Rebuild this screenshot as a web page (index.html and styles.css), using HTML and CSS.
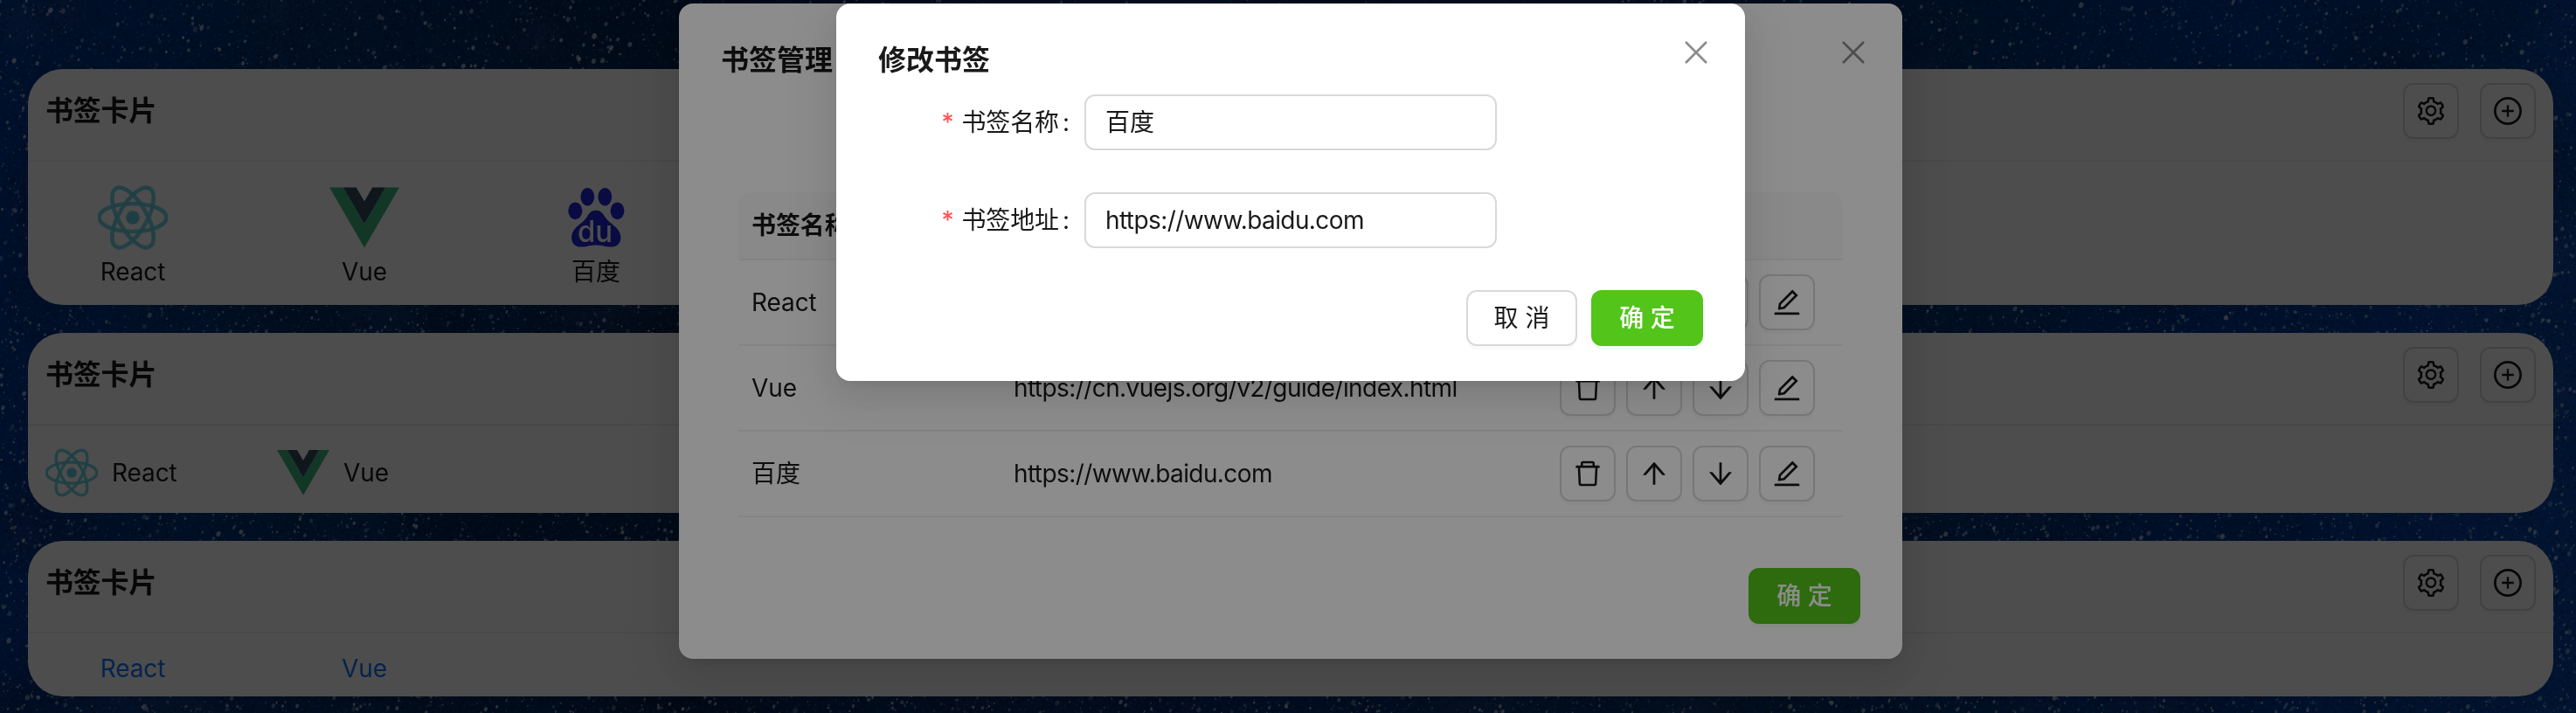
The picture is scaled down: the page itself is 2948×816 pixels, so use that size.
FILE: index.html
```html
<!DOCTYPE html>
<html lang="zh-CN">
<head>
<meta charset="utf-8">
<title>书签</title>
<link rel="stylesheet" href="styles.css">
</head>
<body>
<svg class="sprite" aria-hidden="true">
  <symbol id="i-setting" viewBox="64 64 896 896"><path d="M924.8 625.7l-65.5-56c3.1-19 4.7-38.4 4.7-57.8s-1.6-38.8-4.7-57.8l65.5-56a32.03 32.03 0 009.3-35.2l-.9-2.6a443.74 443.74 0 00-79.7-137.9l-1.8-2.1a32.12 32.12 0 00-35.1-9.5l-81.3 28.9c-30-24.6-63.5-44-99.7-57.6l-15.7-85a32.05 32.05 0 00-25.8-25.7l-2.7-.5c-52.1-9.4-106.9-9.4-159 0l-2.7.5a32.05 32.05 0 00-25.8 25.7l-15.8 85.4a351.86 351.86 0 00-99 57.4l-81.9-29.1a32 32 0 00-35.1 9.5l-1.8 2.1a446.02 446.02 0 00-79.7 137.9l-.9 2.6c-4.5 12.5-.8 26.5 9.3 35.2l66.3 56.6c-3.1 18.8-4.6 38-4.6 57.1 0 19.2 1.5 38.4 4.6 57.1L99 625.5a32.03 32.03 0 00-9.3 35.2l.9 2.6c18.1 50.4 44.9 96.9 79.7 137.9l1.8 2.1a32.12 32.12 0 0035.1 9.5l81.9-29.1c29.8 24.5 63.1 43.9 99 57.4l15.8 85.4a32.05 32.05 0 0025.8 25.7l2.7.5a449.4 449.4 0 00159 0l2.7-.5a32.05 32.05 0 0025.8-25.7l15.7-85a350 350 0 0099.7-57.6l81.3 28.9a32 32 0 0035.1-9.5l1.8-2.1c34.8-41.1 61.6-87.5 79.7-137.9l.9-2.6c4.5-12.3.8-26.3-9.3-35zM788.3 465.9c2.5 15.1 3.8 30.6 3.8 46.1s-1.3 31-3.8 46.1l-6.6 40.1 74.7 63.9a370.03 370.03 0 01-42.6 73.6L721 702.8l-31.4 25.8c-23.9 19.6-50.5 35-79.3 45.8l-38.1 14.3-17.9 97a377.5 377.5 0 01-85 0l-17.9-97.2-37.8-14.5c-28.5-10.8-55-26.2-78.7-45.7l-31.4-25.9-93.4 33.2c-17-22.9-31.2-47.6-42.6-73.6l75.5-64.5-6.5-40c-2.4-14.9-3.7-30.3-3.7-45.5 0-15.3 1.2-30.6 3.7-45.5l6.5-40-75.5-64.5c11.3-26.1 25.6-50.7 42.6-73.6l93.4 33.2 31.4-25.9c23.7-19.5 50.2-34.9 78.7-45.7l37.9-14.3 17.9-97.2c28.1-3.2 56.8-3.2 85 0l17.9 97 38.1 14.3c28.7 10.8 55.4 26.2 79.3 45.8l31.4 25.8 92.8-32.9c17 22.9 31.2 47.6 42.6 73.6L781.8 426l6.5 39.9zM512 326c-97.2 0-176 78.8-176 176s78.8 176 176 176 176-78.8 176-176-78.8-176-176-176zm79.2 255.2A111.6 111.6 0 01512 614c-29.9 0-58-11.7-79.2-32.8A111.6 111.6 0 01400 502c0-29.9 11.7-58 32.8-79.2C454 401.6 482.1 390 512 390c29.9 0 58 11.6 79.2 32.8A111.6 111.6 0 01624 502c0 29.9-11.7 58-32.8 79.2z"/></symbol>
  <symbol id="i-plus" viewBox="64 64 896 896"><path d="M696 480H544V328c0-4.4-3.6-8-8-8h-48c-4.4 0-8 3.6-8 8v152H328c-4.4 0-8 3.6-8 8v48c0 4.4 3.6 8 8 8h152v152c0 4.4 3.6 8 8 8h48c4.4 0 8-3.6 8-8V544h152c4.4 0 8-3.6 8-8v-48c0-4.4-3.6-8-8-8z"/><path d="M512 64C264.6 64 64 264.6 64 512s200.6 448 448 448 448-200.6 448-448S759.4 64 512 64zm0 820c-205.4 0-372-166.6-372-372s166.6-372 372-372 372 166.6 372 372-166.6 372-372 372z"/></symbol>
  <symbol id="i-delete" viewBox="64 64 896 896"><path d="M360 184h-8c4.4 0 8-3.6 8-8v8h304v-8c0 4.4 3.6 8 8 8h-8v72h72v-80c0-35.3-28.7-64-64-64H352c-35.3 0-64 28.7-64 64v80h72v-72zm504 72H160c-17.7 0-32 14.3-32 32v32c0 4.4 3.6 8 8 8h60.4l24.7 523c1.6 34.1 29.8 61 63.9 61h454c34.2 0 62.3-26.8 63.9-61l24.7-523H888c4.4 0 8-3.6 8-8v-32c0-17.7-14.3-32-32-32zM731.3 840H292.7l-24.2-512h487l-24.2 512z"/></symbol>
  <symbol id="i-up" viewBox="64 64 896 896"><path d="M868 545.5L536.1 163a31.96 31.96 0 00-48.3 0L156 545.5a7.97 7.97 0 006 13.2h81c4.6 0 9-2 12.1-5.5L474 300.9V864c0 4.4 3.6 8 8 8h60c4.4 0 8-3.6 8-8V300.9l218.9 252.3c3 3.5 7.4 5.5 12.1 5.5h81c6.8 0 10.5-8 6-13.2z"/></symbol>
  <symbol id="i-down" viewBox="64 64 896 896"><path d="M862 465.3h-81c-4.6 0-9 2-12.1 5.5L550 723.1V160c0-4.4-3.6-8-8-8h-60c-4.4 0-8 3.6-8 8v563.1L255.1 470.8c-3-3.5-7.4-5.5-12.1-5.5h-81c-6.8 0-10.5 8.1-6 13.2L487.9 861a31.96 31.96 0 0048.3 0L868 478.5c4.5-5.2.8-13.2-6-13.2z"/></symbol>
  <symbol id="i-edit" viewBox="64 64 896 896"><path d="M257.7 752c2 0 4-.2 6-.5L431.9 722c2-.4 3.9-1.3 5.3-2.8l423.9-423.9a9.96 9.96 0 000-14.1L694.9 114.9c-1.9-1.9-4.4-2.9-7.1-2.9s-5.2 1-7.1 2.9L256.8 538.8c-1.5 1.5-2.4 3.3-2.8 5.3l-29.5 168.2a33.5 33.5 0 009.4 29.8c6.6 6.4 14.9 9.9 23.8 9.9zm67.4-174.4L687.8 215l73.3 73.3-362.7 362.6-88.9 15.7 15.6-89zM880 836H144c-17.7 0-32 14.3-32 32v36c0 4.4 3.6 8 8 8h784c4.4 0 8-3.6 8-8v-36c0-17.7-14.3-32-32-32z"/></symbol>
  <symbol id="i-close" viewBox="0 0 32 32"><path d="M4.8 4.8 27.2 27.2M27.2 4.8 4.8 27.2" fill="none" stroke="currentColor" stroke-width="2.7" stroke-linecap="round"/></symbol>
  <symbol id="l-react" viewBox="0 0 80 80"><g fill="none" stroke="#66d0e2" stroke-width="4.6" stroke-opacity=".9"><ellipse cx="40" cy="40" rx="38.5" ry="16"/><ellipse cx="40" cy="40" rx="38.5" ry="16" transform="rotate(60 40 40)"/><ellipse cx="40" cy="40" rx="38.5" ry="16" transform="rotate(120 40 40)"/></g><circle cx="40" cy="40" r="7.8" fill="#66d0e2"/></symbol>
  <symbol id="l-vue" viewBox="0 0 256 221"><path fill="#41b883" d="M0 0l128 220.8L256 0h-51.2L128 132.5 50.6 0z"/><path fill="#35495e" d="M50.6 0 128 133.1 204.8 0h-47.4L128 51.2 97.9 0z"/></symbol>
  <symbol id="l-baidu" viewBox="0 0 80 80"><g fill="#2226dd"><ellipse cx="16.3" cy="32.3" rx="8" ry="9.9"/><ellipse cx="30.3" cy="16.3" rx="7.9" ry="10.2"/><ellipse cx="50.3" cy="16.3" rx="7.9" ry="10.2"/><ellipse cx="64.5" cy="32.3" rx="7.9" ry="9.9"/><path d="M40 31.700c5 0 8 3.200 10.600 7.800 3.400 5.600 10.400 9 14.400 14.200 3.200 4.200 4.200 9.300 2.700 13.300-2 5.600-7 7-13.200 6.400-5-.5-9-1.900-14.500-1.900s-9.500 1.400-14.500 1.900c-6.200.6-10.700-.8-12.700-6.400-1.500-4-.8-9.100 2.400-13.300 4-5.200 11-8.600 14.400-14.200C32 34.900 35 31.700 40 31.700z"/></g><text class="paw-text" x="19" y="68" textLength="40" lengthAdjust="spacingAndGlyphs">du</text></symbol>
</svg>

<canvas class="sky" id="sky" width="2948" height="816"></canvas>

<main class="page">
  <section class="card">
    <header class="card-head"><h2 class="card-title">书签卡片</h2><div class="card-tools"><button class="btn icon-btn"><svg class="icon"><use href="#i-setting"/></svg></button><button class="btn icon-btn"><svg class="icon"><use href="#i-plus"/></svg></button></div></header>
    <div class="marks large">
      <a class="mark"><svg class="logo"><use href="#l-react"/></svg><span>React</span></a>
      <a class="mark"><svg class="logo"><use href="#l-vue"/></svg><span>Vue</span></a>
      <a class="mark"><svg class="logo"><use href="#l-baidu"/></svg><span>百度</span></a>
    </div>
  </section>
  <section class="card">
    <header class="card-head"><h2 class="card-title">书签卡片</h2><div class="card-tools"><button class="btn icon-btn"><svg class="icon"><use href="#i-setting"/></svg></button><button class="btn icon-btn"><svg class="icon"><use href="#i-plus"/></svg></button></div></header>
    <div class="marks compact">
      <a class="mark"><svg class="logo"><use href="#l-react"/></svg><span>React</span></a>
      <a class="mark"><svg class="logo"><use href="#l-vue"/></svg><span>Vue</span></a>
    </div>
  </section>
  <section class="card">
    <header class="card-head"><h2 class="card-title">书签卡片</h2><div class="card-tools"><button class="btn icon-btn"><svg class="icon"><use href="#i-setting"/></svg></button><button class="btn icon-btn"><svg class="icon"><use href="#i-plus"/></svg></button></div></header>
    <div class="marks links">
      <a class="mark"><span>React</span></a>
      <a class="mark"><span>Vue</span></a>
    </div>
  </section>
</main>

<div class="mask"></div>
<div class="modal manage">
  <button class="close"><svg class="icon"><use href="#i-close"/></svg></button>
  <h2 class="modal-title">书签管理</h2>
  <div class="table">
    <div class="row head"><span>书签名称</span><span></span><span></span></div>
    <div class="row"><span>React</span><span></span><div class="actions"><button class="btn icon-btn"><svg class="icon"><use href="#i-delete"/></svg></button><button class="btn icon-btn"><svg class="icon"><use href="#i-up"/></svg></button><button class="btn icon-btn"><svg class="icon"><use href="#i-down"/></svg></button><button class="btn icon-btn"><svg class="icon"><use href="#i-edit"/></svg></button></div></div>
    <div class="row"><span>Vue</span><span class="url">https://cn.vuejs.org/v2/guide/index.html</span><div class="actions"><button class="btn icon-btn"><svg class="icon"><use href="#i-delete"/></svg></button><button class="btn icon-btn"><svg class="icon"><use href="#i-up"/></svg></button><button class="btn icon-btn"><svg class="icon"><use href="#i-down"/></svg></button><button class="btn icon-btn"><svg class="icon"><use href="#i-edit"/></svg></button></div></div>
    <div class="row"><span>百度</span><span class="url">https://www.baidu.com</span><div class="actions"><button class="btn icon-btn"><svg class="icon"><use href="#i-delete"/></svg></button><button class="btn icon-btn"><svg class="icon"><use href="#i-up"/></svg></button><button class="btn icon-btn"><svg class="icon"><use href="#i-down"/></svg></button><button class="btn icon-btn"><svg class="icon"><use href="#i-edit"/></svg></button></div></div>
  </div>
  <footer class="modal-foot"><button class="btn primary">确 定</button></footer>
</div>

<div class="mask"></div>
<div class="modal edit">
  <button class="close"><svg class="icon"><use href="#i-close"/></svg></button>
  <h2 class="modal-title">修改书签</h2>
  <form class="form">
    <div class="field"><label class="label"><span class="star">*</span>书签名称<span class="colon">:</span></label><div class="input">百度</div></div>
    <div class="field"><label class="label"><span class="star">*</span>书签地址<span class="colon">:</span></label><div class="input url">https://www.baidu.com</div></div>
  </form>
  <footer class="modal-foot"><button class="btn cancel">取 消</button><button class="btn primary">确 定</button></footer>
</div>
<script src="sky.js"></script>
</body>
</html>
```

FILE: styles.css
```css
* { box-sizing: border-box; }

body {
  margin: 0;
  height: 816px;
  overflow: hidden;
  position: relative;
  background: #03215c;
  color: rgba(0, 0, 0, 0.9);
  font: 28px/44px Inter, "Noto Sans CJK SC", sans-serif;
  letter-spacing: -0.1px;
}

h2 { margin: 0; }

button {
  font: inherit;
  color: inherit;
  padding: 0;
}

.sprite { position: absolute; width: 0; height: 0; }
.sky { position: absolute; left: 0; top: 0; }
.paw-text { font: 500 34px Inter, sans-serif; fill: #fff; }
.url { letter-spacing: -0.58px; }

.icon { display: block; width: 32px; height: 32px; fill: currentColor; }

.page {
  position: relative;
  display: flex;
  flex-direction: column;
  gap: 32px;
  padding: 79px 26px 0 32px;
}

.card {
  background: #fff;
  border-radius: 40px;
  overflow: hidden;
}

.card-head {
  display: flex;
  justify-content: space-between;
  height: 106px;
  padding: 16px 20px 0;
  border-bottom: 2px solid #f0f0f0;
}

.card-title {
  font-size: 32px;
  font-weight: 700;
  line-height: 64px;
  letter-spacing: -0.2px;
}

.card-tools { display: flex; gap: 24px; }

.marks { display: flex; gap: 65px; padding: 24px 20px 16px; }
.mark { width: 200px; display: flex; align-items: center; }
.large .mark { flex-direction: column; }
.large .logo { width: 80px; height: 80px; }
.compact .mark { gap: 16px; }
.compact .logo { width: 60px; height: 60px; }
.links { padding: 18px 20px 10px; color: #1677ff; }
.links .mark { justify-content: center; }

.btn {
  display: flex;
  align-items: center;
  justify-content: center;
  height: 64px;
  border: 2px solid #d9d9d9;
  border-radius: 12px;
  background: #fff;
  box-shadow: 0 4px 0 rgba(0, 0, 0, 0.02);
}

.icon-btn { width: 64px; }
.cancel { width: 127px; }
.primary {
  width: 128px;
  border: 0;
  background: #52c41a;
  color: #fff;
  font-weight: 500;
  box-shadow: 0 4px 0 rgba(82, 196, 26, 0.06);
}

.mask { position: absolute; inset: 0; background: rgba(0, 0, 0, 0.45); }

.modal {
  position: absolute;
  top: 4px;
  padding: 41px 48px;
  background: #fff;
  border-radius: 16px;
  box-shadow: 0 12px 32px rgba(0, 0, 0, 0.08), 0 6px 12px -8px rgba(0, 0, 0, 0.12), 0 18px 56px 16px rgba(0, 0, 0, 0.05);
}

.manage { left: 777px; width: 1400px; height: 750px; }
.edit { left: 957px; width: 1040px; height: 432px; }

.modal-title { font-size: 32px; font-weight: 700; line-height: 48px; letter-spacing: 0; }

.close {
  position: absolute;
  top: 40px;
  right: 40px;
  border: 0;
  background: none;
  color: rgba(0, 0, 0, 0.45);
}

.table { margin: 127px 20px 0; }
.row {
  display: grid;
  grid-template-columns: 300px 640px 1fr;
  align-items: center;
  height: 98px;
  border-bottom: 2px solid #f0f0f0;
}
.row > span { padding-left: 15px; }
.row.head {
  height: 78px;
  background: #fafafa;
  border-radius: 16px 16px 0 0;
  font-weight: 700;
}
.actions { display: flex; gap: 12px; }

.modal-foot { display: flex; justify-content: flex-end; gap: 16px; }
.manage .modal-foot { margin-top: 58px; }
.edit .modal-foot { margin-top: 48px; }

.form { display: flex; flex-direction: column; gap: 48px; margin-top: 15px; }
.field { display: flex; height: 64px; }
.label {
  display: flex;
  align-items: center;
  justify-content: flex-end;
  width: 219px;
  margin-right: 17px;
}
.star { color: #ff4d4f; margin-right: 9px; }
.colon { margin-left: 4px; }
.input {
  width: 472px;
  padding: 8px 22px;
  border: 2px solid #d9d9d9;
  border-radius: 12px;
}
```

FILE: sky.js
```js
// Paints the starry backdrop with a seeded generator, so every load looks the same.
const ctx = document.getElementById('sky').getContext('2d');
const W = 2948, H = 816;
let seed = 7;
const rnd = () => {
  seed = (seed * 1664525 + 1013904223) >>> 0;
  return seed / 4294967296;
};

const g = ctx.createLinearGradient(0, 0, W, 0);
[[0, '#003590'], [0.12, '#04306c'], [0.27, '#02224e'], [0.45, '#042a68'], [0.7, '#052c60'], [0.85, '#003388'], [1, '#0042a0']]
  .forEach(([p, c]) => g.addColorStop(p, c));
ctx.fillStyle = g;
ctx.fillRect(0, 0, W, H);

// soft dark and light clouds
for (let i = 0; i < 220; i++) {
  const x = rnd() * W, y = rnd() * H, r = 30 + rnd() * 90;
  const c = ctx.createRadialGradient(x, y, 0, x, y, r);
  c.addColorStop(0, rnd() < 0.5 ? 'rgba(0,8,30,0.16)' : 'rgba(80,90,150,0.16)');
  c.addColorStop(1, 'rgba(0,0,0,0)');
  ctx.fillStyle = c;
  ctx.fillRect(x - r, y - r, 2 * r, 2 * r);
}

// fine grain
for (let i = 0; i < 90000; i++) {
  ctx.fillStyle = rnd() < 0.5 ? 'rgba(0,5,20,0.3)' : 'rgba(110,140,200,0.18)';
  ctx.fillRect(rnd() * W, rnd() * H, 2, 2);
}

// stars, denser towards the bottom
for (let i = 0; i < 24000; i++) {
  const y = rnd() * H;
  if (rnd() > 0.6 + 0.4 * y / H) continue;
  const s = 0.7 + rnd() * rnd() * 2;
  ctx.fillStyle = `rgba(215,225,240,${0.2 + rnd() * 0.5})`;
  ctx.beginPath();
  ctx.ellipse(rnd() * W, y, s, s * 1.25, 0.4, 0, 7);
  ctx.fill();
}
```
